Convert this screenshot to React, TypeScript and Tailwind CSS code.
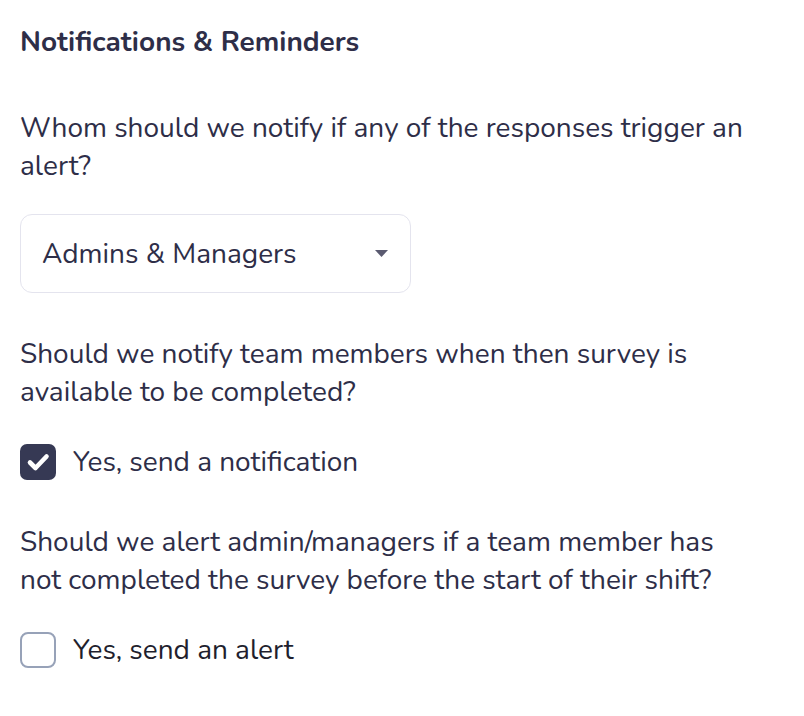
import React from "react";

export default function App() {
  return (
    <div className="min-h-[716px] w-full bg-white px-5 pt-[26px] text-[#2e2e48]" style={{ fontFamily: "Nunito, Lato, 'Noto Sans', sans-serif" }}>
      <div className="w-[732px]">
        <h2 className="text-[28px] font-bold leading-[32px]">Notifications &amp; Reminders</h2>
        <p className="mt-[51px] text-[28px] leading-[38px]">
          Whom should we notify if any of the responses trigger an alert?
        </p>
        <div className="mt-[29px] flex h-[79px] w-[391px] items-center justify-between rounded-[12px] border border-[#e4e4ee] pl-[21px] pr-[22px]">
          <span className="text-[28px]">Admins &amp; Managers</span>
          <svg width="13" height="7" viewBox="0 0 13 7">
            <path d="M0 0h13L6.5 7z" fill="#5a5a70" />
          </svg>
        </div>
        <p className="mt-[42px] text-[28px] leading-[38px]">
          Should we notify team members when then survey is available to be completed?
        </p>
        <label className="mt-[33px] flex items-center gap-[17px]">
          <span className="flex h-[36px] w-[36px] items-center justify-center rounded-[7px] bg-[#363954]">
            <svg width="24" height="20" viewBox="0 0 24 20">
              <path d="M4 10.5l5.5 5.5L20.5 4.5" fill="none" stroke="white" strokeWidth="4.6" strokeLinecap="round" strokeLinejoin="round" />
            </svg>
          </span>
          <span className="text-[28px] leading-[36px]">Yes, send a notification</span>
        </label>
        <p className="mt-[43px] text-[28px] leading-[38px]">
          Should we alert admin/managers if a team member has not completed the survey before the start of their shift?
        </p>
        <label className="mt-[33px] flex items-center gap-[17px]">
          <span className="h-[36px] w-[36px] rounded-[8px] border-2 border-[#97a2b8]" />
          <span className="text-[28px] leading-[36px] text-[#1f1f2e]">Yes, send an alert</span>
        </label>
      </div>
    </div>
  );
}
